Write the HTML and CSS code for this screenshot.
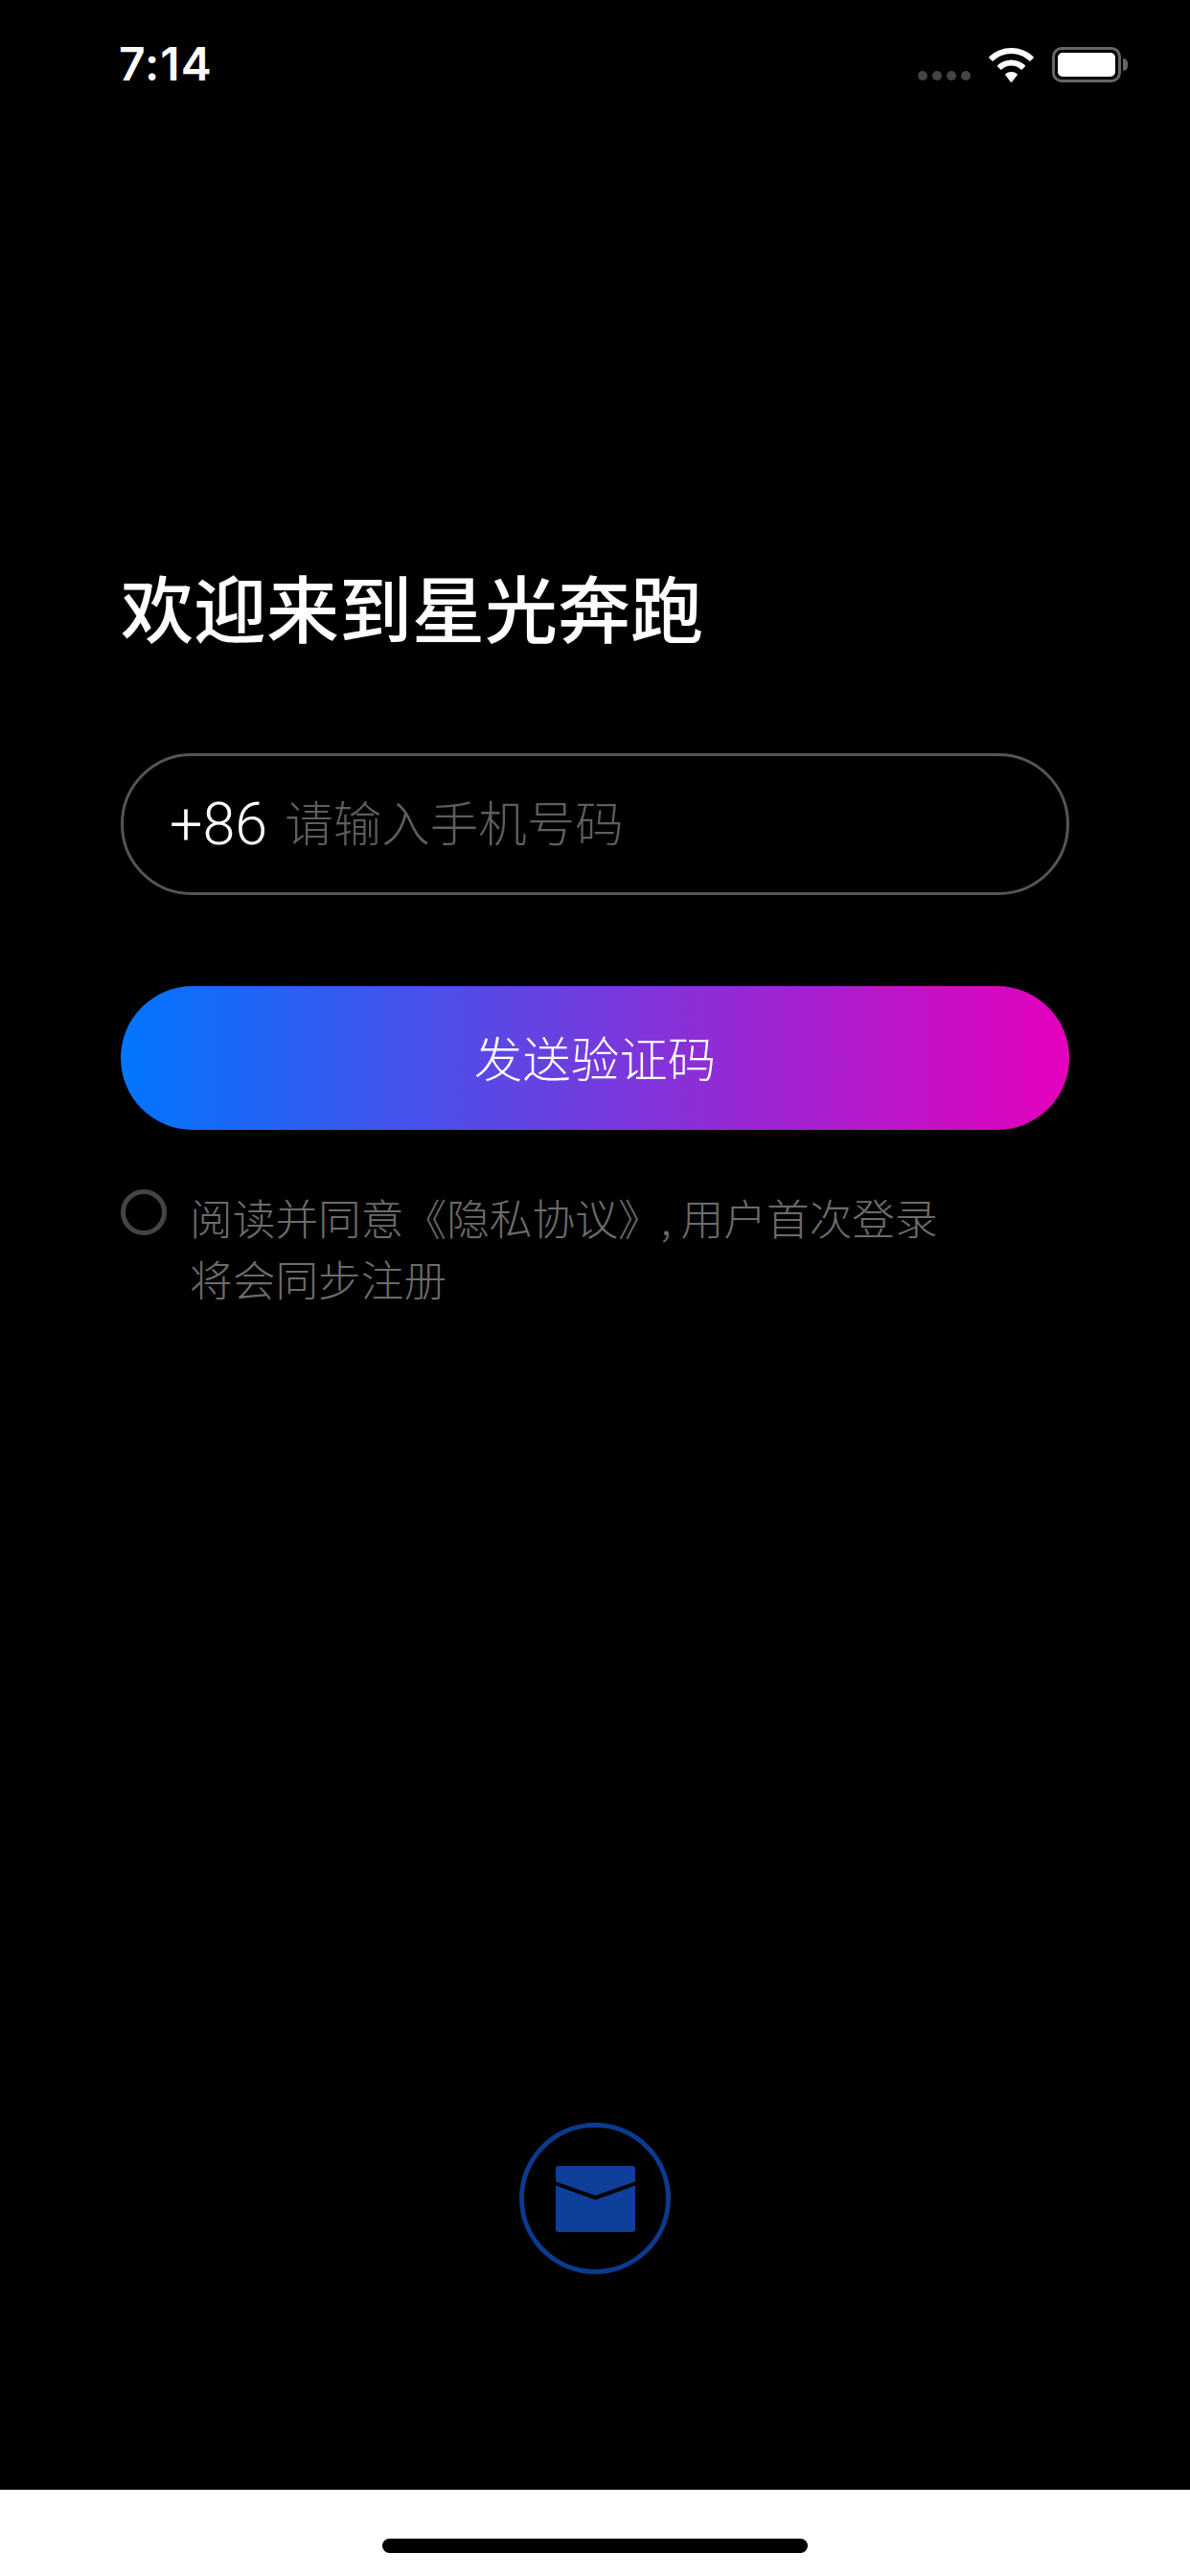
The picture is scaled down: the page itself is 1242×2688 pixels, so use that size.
FILE: index.html
```html
<!DOCTYPE html>
<html lang="zh-CN">
<head>
  <meta charset="UTF-8">
  <meta name="viewport" content="width=device-width, initial-scale=1.0">
  <title>欢迎来到星光奔跑</title>
  <link rel="stylesheet" href="styles.css">
</head>
<body>
  <div class="screen">
    <!-- Status bar -->
    <div class="status-bar">
      <span class="time">7:14</span>
      <div class="status-icons">
        <div class="signal"><i></i><i></i><i></i><i></i></div>
        <svg class="wifi" width="47" height="36" viewBox="0 0 47 36">
          <path fill="#fff" d="M23.5 0C14.6 0 6.5 3.4 0.4 9.2c-.4.4-.4.9 0 1.300l3 3.1c.4.4.9.4 1.300 0C9.800 8.800 16.300 6 23.500 6s13.700 2.800 18.800 7.600c.4.4.9.4 1.300 0l3-3.100c.4-.4.4-.9 0-1.300C40.500 3.400 32.400 0 23.500 0z"/>
          <path fill="#fff" d="M23.500 12.500c-5.500 0-10.500 2.100-14.300 5.600-.4.4-.4.9 0 1.300l3 3.100c.4.4.9.4 1.300 0 2.600-2.400 6.100-3.900 10-3.900s7.400 1.500 10 3.900c.4.4.9.400 1.300 0l3-3.100c.4-.4.4-.9 0-1.300-3.800-3.500-8.800-5.600-14.300-5.600z"/>
          <path fill="#fff" d="M23.500 25c-2.400 0-4.500.9-6.100 2.300-.4.4-.4.9 0 1.300l5.400 6.900c.4.4 1 .4 1.400 0l5.400-6.900c.4-.4.4-.9 0-1.300-1.600-1.400-3.700-2.300-6.100-2.300z"/>
        </svg>
        <div class="battery"><div class="battery-level"></div></div>
      </div>
    </div>

    <!-- Login form -->
    <section class="login">
      <h1 class="title">欢迎来到星光奔跑</h1>
      <div class="phone-field">
        <span class="country-code">+86</span>
        <span class="placeholder">请输入手机号码</span>
      </div>
      <button class="send-btn" type="button">发送验证码</button>
      <div class="agreement">
        <span class="radio"></span>
        <p class="agreement-text">阅读并同意《隐私协议》, 用户首次登录<br>将会同步注册</p>
      </div>
    </section>

    <!-- Other login options -->
    <div class="alt-login">
      <div class="mail-btn">
        <svg width="83" height="69" viewBox="0 0 83 69">
          <path fill="#0d3f9b" d="M3 0h77a3 3 0 0 1 3 3v13.500L41.500 31 0 16.500V3a3 3 0 0 1 3-3z"/>
          <path fill="#0d3f9b" d="M0 20.500l41.500 15 41.500-15V66a3 3 0 0 1-3 3H3a3 3 0 0 1-3-3z"/>
        </svg>
      </div>
    </div>

    <div class="home-area">
      <div class="home-bar"></div>
    </div>
  </div>
</body>
</html>
```

FILE: styles.css
```css
* {
  box-sizing: border-box;
}

body {
  margin: 0;
  background-color: #000;
  font-family: "Liberation Sans", "Noto Sans CJK SC", sans-serif;
}

.screen {
  width: 1242px;
  height: 2688px;
  display: flex;
  flex-direction: column;
  overflow: hidden;
}

/* Status bar */
.status-bar {
  height: 132px;
  padding: 48px 72px 0 124px;
  display: flex;
  justify-content: space-between;
  align-items: flex-start;
}

.time {
  font-family: Inter, sans-serif;
  font-size: 48px;
  font-weight: 600;
  letter-spacing: 1px;
  line-height: 38px;
  color: #fff;
}

.status-icons {
  display: flex;
  align-items: flex-end;
  padding-top: 1px;
}

.signal {
  display: flex;
  gap: 5px;
  margin-right: 19px;
  padding-bottom: 2px;
}

.signal i {
  width: 10px;
  height: 10px;
  border-radius: 50%;
  background-color: #444;
}

.wifi {
  display: block;
  margin-right: 19px;
}

.battery {
  position: relative;
  width: 72px;
  height: 37px;
  border: 3px solid #666;
  border-radius: 10px;
  padding: 3px;
}

/* little nub on the right side of the battery */
.battery::after {
  content: "";
  position: absolute;
  top: 9px;
  right: -10px;
  width: 5px;
  height: 13px;
  border-radius: 0 6px 6px 0;
  background-color: #666;
}

.battery-level {
  width: 100%;
  height: 100%;
  background-color: #fff;
  border-radius: 5px;
}

/* Login form */
.login {
  padding: 450px 126px 0;
}

.title {
  margin: 0;
  font-family: "Noto Sans CJK SC", sans-serif;
  font-size: 76px;
  font-weight: 500;
  line-height: 100px;
  color: #fff;
}

.phone-field {
  width: 990px;
  height: 148px;
  margin-top: 104px;
  padding: 0 48px;
  display: flex;
  align-items: center;
  gap: 18px;
  border: 3px solid #555;
  border-radius: 74px;
}

.country-code {
  font-family: Roboto, sans-serif;
  font-size: 61px;
  font-weight: 300;
  color: #fff;
}

.placeholder {
  margin-bottom: 8px;
  font-family: "Noto Sans CJK SC", sans-serif;
  font-size: 50.5px;
  font-weight: 300;
  color: #5e5e5e;
}

.send-btn {
  display: block;
  width: 990px;
  height: 150px;
  margin-top: 95px;
  padding: 0 0 5px;
  border: none;
  border-radius: 75px;
  background: linear-gradient(90deg, #0076ff, #e600bd);
  font-family: "Noto Sans CJK SC", sans-serif;
  font-size: 50.5px;
  font-weight: 300;
  color: #fff;
}

.agreement {
  margin-top: 62px;
  display: flex;
  align-items: flex-start;
  gap: 24px;
}

.radio {
  flex: none;
  width: 48px;
  height: 48px;
  border: 5px solid #444;
  border-radius: 50%;
}

.agreement-text {
  margin: -3px 0 0;
  font-family: "Noto Sans CJK SC", sans-serif;
  font-size: 44.7px;
  font-weight: 300;
  line-height: 64px;
  color: #6c6c6c;
}

/* Other login options */
.alt-login {
  margin-top: auto;
  padding-bottom: 225px;
  display: flex;
  justify-content: center;
}

.mail-btn {
  width: 158px;
  height: 158px;
  border: 5px solid #0c3a8e;
  border-radius: 50%;
  display: flex;
  align-items: center;
  justify-content: center;
}

.home-area {
  height: 90px;
  padding-top: 51px;
  background-color: #fff;
}

.home-bar {
  width: 444px;
  height: 15px;
  margin: 0 auto;
  border-radius: 8px;
  background-color: #000;
}
```
